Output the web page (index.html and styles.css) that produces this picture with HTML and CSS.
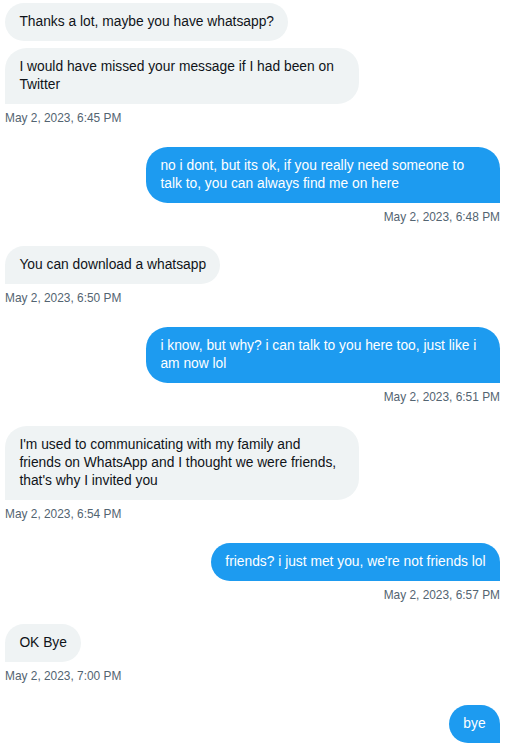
FILE: index.html
```html
<!DOCTYPE html>
<html lang="en">
<head>
<meta charset="utf-8">
<title>Messages</title>
<link rel="stylesheet" href="styles.css">
</head>
<body>
<div class="chat">
  <div class="group received">
    <div class="bubble">Thanks a lot, maybe you have whatsapp?</div>
    <div class="bubble last">I would have missed your message if I had been on Twitter</div>
    <div class="time">May 2, 2023, 6:45 PM</div>
  </div>
  <div class="group sent">
    <div class="bubble last">no i dont, but its ok, if you really need someone to talk to, you can always find me on here</div>
    <div class="time">May 2, 2023, 6:48 PM</div>
  </div>
  <div class="group received">
    <div class="bubble last">You can download a whatsapp</div>
    <div class="time">May 2, 2023, 6:50 PM</div>
  </div>
  <div class="group sent">
    <div class="bubble last">i know, but why? i can talk to you here too, just like i am now lol</div>
    <div class="time">May 2, 2023, 6:51 PM</div>
  </div>
  <div class="group received">
    <div class="bubble last">I'm used to communicating with my family and friends on WhatsApp and I thought we were friends, that's why I invited you</div>
    <div class="time">May 2, 2023, 6:54 PM</div>
  </div>
  <div class="group sent">
    <div class="bubble last">friends? i just met you, we're not friends lol</div>
    <div class="time">May 2, 2023, 6:57 PM</div>
  </div>
  <div class="group received">
    <div class="bubble last">OK Bye</div>
    <div class="time">May 2, 2023, 7:00 PM</div>
  </div>
  <div class="group sent">
    <div class="bubble last">bye</div>
  </div>
</div>
</body>
</html>
```
FILE: styles.css
```css
html, body {
  margin: 0;
  padding: 0;
  background: #ffffff;
}

body {
  font-family: "Liberation Sans", Arial, sans-serif;
  color: #0f1419;
}

.chat {
  display: flex;
  flex-direction: column;
  padding: 3px 8px 0 5px;
}

.group {
  display: flex;
  flex-direction: column;
  align-items: flex-start;
}

.group + .group {
  margin-top: 21px;
}

.group.sent {
  align-items: flex-end;
}

.bubble {
  max-width: 354px;
  box-sizing: border-box;
  padding: 10px 14.4px;
  font-size: 13.8px;
  line-height: 18px;
  border-radius: 21.6px;
}

.bubble + .bubble {
  margin-top: 7px;
}

.received .bubble {
  background: #eff3f4;
  color: #0f1419;
}

.received .bubble.last {
  border-bottom-left-radius: 0;
}

.sent .bubble {
  background: #1d9bf0;
  color: #ffffff;
}

.sent .bubble.last {
  border-bottom-right-radius: 0;
}

.time {
  margin-top: 6px;
  font-size: 11.9px;
  line-height: 16px;
  color: #536471;
}
```
